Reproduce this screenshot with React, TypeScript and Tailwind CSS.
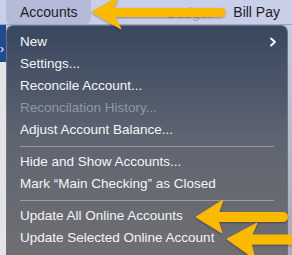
import React from 'react';

const items: { label: string; disabled?: boolean; submenu?: boolean }[][] = [
    [
        { label: 'New', submenu: true },
        { label: 'Settings...' },
        { label: 'Reconcile Account...' },
        { label: 'Reconcilation History...', disabled: true },
        { label: 'Adjust Account Balance...' },
    ],
    [
        { label: 'Hide and Show Accounts...' },
        { label: 'Mark \u201CMain Checking\u201D as Closed' },
    ],
    [
        { label: 'Update All Online Accounts' },
        { label: 'Update Selected Online Account' },
    ],
];

const Arrows: React.FC = () => (
    <svg className="absolute inset-0 pointer-events-none" width="292" height="255" viewBox="0 0 292 255">
        <defs>
            <filter id="sh" x="-10%" y="-30%" width="120%" height="160%">
                <feDropShadow dx="0" dy="1" stdDeviation="1.2" floodColor="#000" floodOpacity="0.35" />
            </filter>
        </defs>
        <g fill="#fbb903" stroke="#fbb903" filter="url(#sh)">
            <line x1="110" y1="12.5" x2="221" y2="12.5" strokeWidth="9" strokeLinecap="round" />
            <polygon points="92,12 118,-3 112,12 121,29" strokeWidth="1" strokeLinejoin="round" />
        </g>
        <g fill="#fbb903" stroke="#fbb903" filter="url(#sh)">
            <line x1="214" y1="217" x2="283" y2="217" strokeWidth="10" strokeLinecap="round" />
            <polygon points="196,217 223,200 217,217 222,233" strokeWidth="1" strokeLinejoin="round" />
        </g>
        <g fill="#fbb903" stroke="#fbb903" filter="url(#sh)">
            <line x1="246" y1="239.5" x2="300" y2="239.5" strokeWidth="10" strokeLinecap="round" />
            <polygon points="227,239 257,223 250,239 255,259" strokeWidth="1" strokeLinejoin="round" />
        </g>
    </svg>
);

export default function App() {
    return (
        <div className="relative w-[292px] h-[255px] overflow-hidden bg-[#c3c7df] text-[13.5px]" style={{ fontFamily: '"Liberation Sans", Arial, sans-serif' }}>
            <div className="h-[25px] flex items-stretch bg-[#c9cee9] border-b border-[#9ea4bf]">
                <div className="ml-[6px] w-[85px] rounded-b-[5px] bg-[#b3bbd9] flex items-center pl-[14px] text-[14px] text-[#1d1d1f]">Accounts</div>
                <div className="ml-[76px] mt-[2px] flex items-center text-[14px] text-[#9ea3ba]">Budget</div>
                <div className="ml-auto mr-[12px] flex items-center text-[14px] text-[#1d1d1f]">Bill Pay</div>
            </div>
            <div className="flex h-[230px]">
                <div className="w-[6px] flex flex-col">
                    <div className="h-[37px] bg-[#1f4c8c] flex items-end pb-[7px] text-white text-[12px] leading-none">&#x203A;</div>
                    <div className="flex-1 bg-[#e4e4e6]" />
                </div>
                <div className="flex-1 rounded-t-[7px] border border-[#6c7385] border-b-0 bg-gradient-to-b from-[#38475f] via-[#5f6571] to-[#6f6f72] pt-[5px]">
                    {items.map((group, gi) => (
                        <div key={gi}>
                            {gi > 0 && (
                                <div className="h-[10px] flex items-center px-[13px]">
                                    <div className="h-px w-full bg-[#9a9ca3]" />
                                </div>
                            )}
                            {group.map((it) => (
                                <div key={it.label} className={`h-[22px] flex items-center pl-[13px] pr-[10px] ${it.disabled ? 'text-[#9297a1]' : 'text-[#f4f5f7]'}`}>
                                    <span className="flex-1">{it.label}</span>
                                    {it.submenu && (
                                        <svg width="8" height="10" viewBox="0 0 8 10">
                                            <path d="M2 1.5 L6 5 L2 8.5" fill="none" stroke="#fff" strokeWidth="1.8" strokeLinecap="round" strokeLinejoin="round" />
                                        </svg>
                                    )}
                                </div>
                            ))}
                        </div>
                    ))}
                </div>
                <div className="w-[4px] bg-gradient-to-b from-[#c6cae2] to-[#a9abb8]" />
            </div>
            <Arrows />
        </div>
    );
}
